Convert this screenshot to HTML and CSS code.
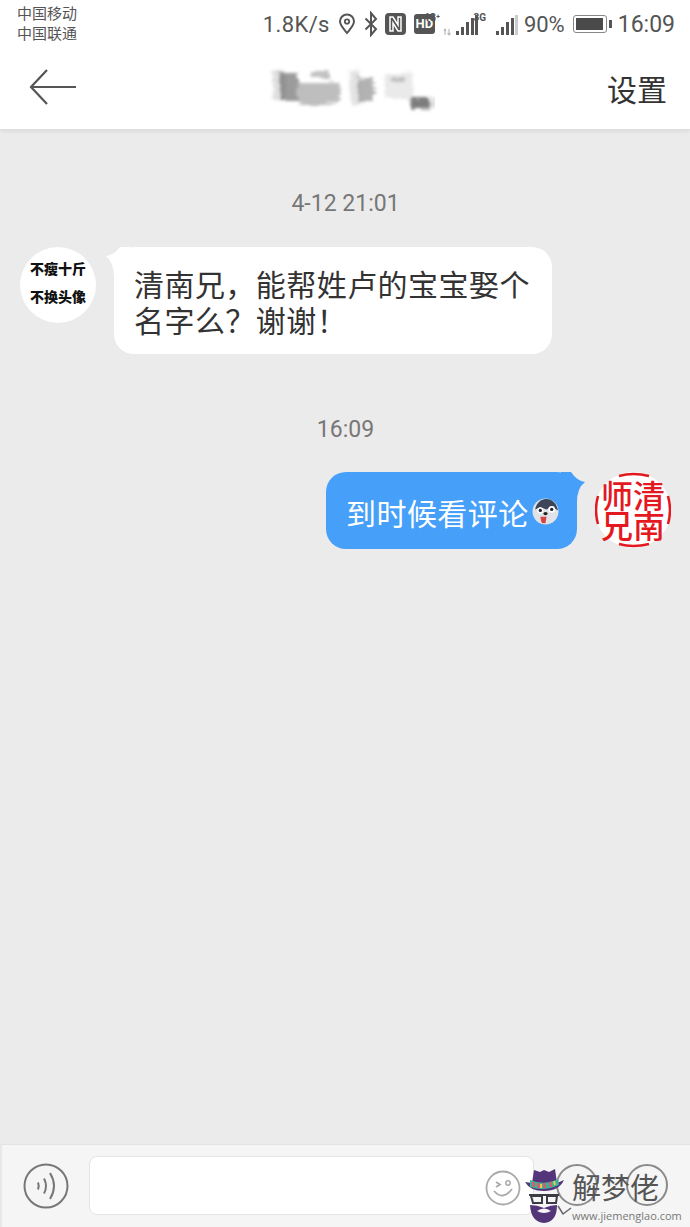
FILE: index.html
```html
<!DOCTYPE html>
<html lang="zh-CN">
<head>
    <meta charset="UTF-8">
    <meta name="viewport" content="width=device-width, initial-scale=1.0">
    <title>私信</title>
    <link rel="stylesheet" href="styles.css">
</head>
<body>
    <div class="page">
        <header class="top">
            <div class="status">
                <div class="carriers">
                    <div>中国移动</div>
                    <div>中国联通</div>
                </div>
                <div class="status-right">
                    <span class="speed">1.8K/s</span>
                    <svg class="ico ico-pin" width="18" height="22" viewBox="0 0 18 22"><path d="M9 20 C5 15 2 12 2 8.500 A7 7 0 0 1 16 8.500 C16 12 13 15 9 20Z" fill="none" stroke="#555" stroke-width="2"/><circle cx="9" cy="8.500" r="2.200" fill="none" stroke="#555" stroke-width="1.800"/></svg>
                    <svg class="ico ico-bt" width="14" height="26" viewBox="0 0 14 26"><path d="M1.500 7.500 L12 18 L7 24 V2 L12 8 L1.500 18.500" fill="none" stroke="#555" stroke-width="2"/></svg>
                    <svg class="ico ico-nfc" width="21" height="22" viewBox="0 0 21 22"><rect width="21" height="22" rx="4" fill="#555"/><path d="M5 4 H8 L13 12 V4 H16 V18 H13 L8 10 V18 H5Z" fill="none" stroke="#fff" stroke-width="1.500"/></svg>
                    <span class="hd">HD</span>
                    <svg class="ico ico-sig4" width="42" height="24" viewBox="0 0 42 24"><path d="M8 17 V23 M7 19 L8 17 L9 19 M12 17 V23 M10.500 21 L12 23 L13.500 21" fill="none" stroke="#bbb" stroke-width="1.200"/><rect x="19" y="19" width="3" height="4" fill="#555"/><rect x="24" y="15" width="3" height="8" fill="#555"/><rect x="29" y="10" width="3" height="13" fill="#555"/><rect x="34" y="6" width="3" height="17" fill="#555"/><rect x="38" y="3" width="3" height="20" fill="#555"/></svg>
                    <span class="net net-4g">4G⁺</span>
                    <svg class="ico ico-sig3" width="34" height="24" viewBox="0 0 34 24"><rect x="11" y="19" width="3" height="4" fill="#555"/><rect x="16" y="15" width="3" height="8" fill="#555"/><rect x="21" y="10" width="3" height="13" fill="#555"/><rect x="26" y="6" width="3" height="17" fill="#555"/><rect x="30" y="3" width="3" height="20" fill="#ccc"/></svg>
                    <span class="net net-3g">3G</span>
                    <span class="batt-text">90%</span>
                    <span class="batt"><span class="batt-fill"></span></span>
                    <span class="clock">16:09</span>
                </div>
            </div>
            <div class="nav">
                <svg class="back" width="48" height="38" viewBox="0 0 48 38"><path d="M18 2 L2 19 L18 36 M2 19 H47" fill="none" stroke="#555" stroke-width="2.200"/></svg>
                <svg class="nick" width="170" height="50" viewBox="0 0 170 50" aria-hidden="true">
                    <defs>
                        <filter id="smudge" x="-10%" y="-20%" width="120%" height="140%">
                            <feTurbulence type="fractalNoise" baseFrequency="0.05 0.45" numOctaves="2" seed="4" result="n"/>
                            <feDisplacementMap in="SourceGraphic" in2="n" scale="9"/>
                            <feGaussianBlur stdDeviation="1.600"/>
                        </filter>
                    </defs>
                    <g filter="url(#smudge)" fill="#666">
                        <rect x="15" y="9" width="18" height="27" opacity=".65"/>
                        <rect x="8" y="6" width="12" height="30" opacity=".2"/>
                        <rect x="33" y="18" width="42" height="22" opacity=".42"/>
                        <rect x="46" y="7" width="18" height="7" opacity=".4"/>
                        <rect x="85" y="7" width="10" height="33" opacity=".18"/>
                        <rect x="93" y="14" width="16" height="24" opacity=".5"/>
                        <rect x="120" y="9" width="28" height="26" opacity=".14"/>
                        <rect x="126" y="12" width="14" height="6" opacity=".3"/>
                        <rect x="146" y="34" width="18" height="11" opacity=".85"/>
                        <rect x="162" y="34" width="9" height="10" opacity=".2"/>
                    </g>
                </svg>
                <div class="settings">设置</div>
            </div>
        </header>

        <main class="chat">
            <div class="time time-first">4-12 21:01</div>
            <div class="row">
                <div class="avatar avatar-txt">
                    <div>不瘦十斤</div>
                    <div>不换头像</div>
                </div>
                <div class="bubble bubble-in">清南兄，能帮姓卢的宝宝娶个名字么？谢谢！</div>
            </div>
            <div class="time time-second">16:09</div>
            <div class="row row-out">
                <div class="bubble bubble-out">
                    到时候看评论
                    <svg class="emoji" width="27" height="27" viewBox="0 0 26 26"><circle cx="13" cy="13" r="12.500" fill="#dfe2e6"/><path d="M3 11 C5 3 10 1 14 1 C20 1 24 6 25 12 L19 8 L14 11 L8 9Z" fill="#3c4658"/><circle cx="8" cy="12" r="3" fill="#fff"/><circle cx="19" cy="11" r="3.200" fill="#fff"/><circle cx="8" cy="12" r="1.600" fill="#223"/><circle cx="19" cy="11" r="1.600" fill="#223"/><ellipse cx="13" cy="15" rx="2" ry="1.500" fill="#222"/><path d="M8 18 H14 L13 24 Q10 25 9 23Z" fill="#d9433f"/></svg>
                </div>
                <div class="avatar avatar-seal">
                    <svg class="seal-ring" width="76" height="76" viewBox="0 0 76 76"><path d="M24 4 Q38 0 54 4 M24 72 Q38 76 54 72 M3 24 Q-1 38 3 52 M73 24 Q77 38 73 52" fill="none" stroke="#e3191f" stroke-width="2.500"/></svg>
                    <div class="seal-text">师清<br>兄南</div>
                </div>
            </div>
        </main>

        <footer class="bar">
            <svg class="voice" width="46" height="46" viewBox="0 0 46 46"><circle cx="23" cy="23" r="21.500" fill="none" stroke="#777" stroke-width="2"/><path d="M15 19.500 Q16.500 23 15 26.500 M21 15.500 Q25 23 21 30.500 M27 10 Q35 23 27 36" fill="none" stroke="#777" stroke-width="2"/></svg>
            <div class="input"></div>
            <svg class="smile" width="36" height="36" viewBox="0 0 36 36"><circle cx="18" cy="18" r="16.500" fill="none" stroke="#aaa" stroke-width="1.800"/><path d="M9 21 Q18 31 27 19 M11 12 L15 14.500 L11 17" fill="none" stroke="#aaa" stroke-width="1.800"/><circle cx="23" cy="13" r="2.200" fill="none" stroke="#aaa" stroke-width="1.500"/></svg>
            <div class="round"></div>
            <div class="round"></div>
        </footer>

        <div class="mark">
            <svg class="mark-man" width="42" height="56" viewBox="0 0 42 56">
                <path d="M9 15 L11 2 L17 4 L21 2 L26 4 L32 1 L34 15 L41 12 Q36 23 21 23 Q7 23 2 14Z" fill="#54357a"/>
                <path d="M7 12 Q21 18 35 11 L36 17 Q21 24 7 19Z" fill="#38b49c"/>
                <path d="M10 14 L11 19 M15 15 L16 20 M21 15 L22 20 M27 14 L28 19" stroke="#e2566a" stroke-width="2.500"/>
                <path d="M18 16 L18 20 M31 13 L32 17" stroke="#f2c94c" stroke-width="2"/>
                <path d="M6 27 H36 M8 28 H19 V35 H10Z M24 28 H34 L33 35 H24Z" fill="none" stroke="#3b3b46" stroke-width="2"/>
                <path d="M7 37 Q14 37 21 40 Q28 37 34 37 Q34 54 21 55 Q8 54 7 37Z" fill="#54357a"/>
                <path d="M14 43 Q21 38 28 43 Q21 47 14 43Z" fill="#f5f5f5"/>
                <path d="M35 38 L40 46 L48 40" fill="none" stroke="#666" stroke-width="1.500"/>
            </svg>
            <div class="mark-text">
                <div class="mark-name">解梦佬</div>
                <div class="mark-url">www.jiemenglao.com</div>
            </div>
        </div>
    </div>
</body>
</html>
```

FILE: styles.css
```css
* {
    box-sizing: border-box;
}
body {
    margin: 0;
    font-family: "Roboto", "Noto Sans CJK SC", sans-serif;
    color: #333;
}
.page {
    position: relative;
    width: 690px;
    height: 1227px;
    display: flex;
    flex-direction: column;
    overflow: hidden;
    background: #ebebeb;
}

/* status + title */
.top {
    height: 130px;
    flex: none;
    background: #fff;
    border-bottom: 1px solid #dedede;
    box-shadow: 0 2px 3px rgba(0,0,0,.06);
}
.status {
    height: 48px;
    display: flex;
    justify-content: space-between;
    padding: 4px 15px 0 17px;
}
.carriers {
    font-size: 15px;
    line-height: 20px;
    color: #555;
}
.status-right {
    display: flex;
    align-items: center;
    height: 40px;
    color: #555;
    position: relative;
}
.speed {
    font-size: 22px;
    letter-spacing: .4px;
}
.ico {
    flex: none;
}
.ico-pin {
    margin-left: 8px;
}
.ico-bt {
    margin-left: 8px;
}
.ico-nfc {
    margin-left: 7px;
}
.hd {
    width: 21px;
    height: 20px;
    margin: 0 2px 0 8px;
    border-radius: 3px;
    background: #555;
    color: #fff;
    font-size: 13px;
    font-weight: 700;
    line-height: 20px;
    text-align: center;
}
.ico-sig3 {
    margin-left: 6px;
}
.net {
    position: absolute;
    top: 8px;
    font-size: 10px;
    font-weight: 700;
}
.net-4g {
    right: 235px;
}
.net-3g {
    right: 189px;
}
.batt-text {
    font-size: 22px;
    margin: 0 8px 0 5px;
}
.batt {
    position: relative;
    width: 34px;
    height: 18px;
    margin-right: 11px;
    padding: 2px;
    border: 1px solid #888;
    border-radius: 3px;
}
.batt::after {
    content: '';
    position: absolute;
    right: -6px;
    top: 4px;
    width: 3px;
    height: 8px;
    background: #555;
}
.batt-fill {
    display: block;
    width: 27px;
    height: 12px;
    background: #4a4a4a;
}
.clock {
    font-size: 23px;
}
.nav {
    height: 81px;
    display: flex;
    align-items: center;
    justify-content: space-between;
    padding: 0 23px 0 29px;
}
.back {
    margin-top: -3px;
}
.nick {
    margin-left: 16px;
}
.settings {
    font-size: 30px;
    margin-top: -1px;
    color: #333;
}

/* messages */
.chat {
    flex: 1;
    padding: 0 19px 0 20px;
}
.time {
    text-align: center;
    font-size: 23px;
    line-height: 28px;
    color: #777;
}
.time-first {
    padding-top: 60px;
    height: 88px;
    margin-bottom: 29px;
}
.time-second {
    margin: 62px 0 28px;
}
.row {
    display: flex;
    align-items: flex-start;
}
.row-out {
    justify-content: flex-end;
}
.avatar {
    position: relative;
    width: 76px;
    height: 76px;
    flex: none;
    border-radius: 50%;
    background: #fff;
}
.avatar-txt {
    padding-top: 7px;
    text-align: center;
    font-family: "Noto Sans CJK SC", sans-serif;
    font-size: 14px;
    font-weight: 900;
    line-height: 28px;
    color: #111;
}
.seal-ring {
    position: absolute;
    left: 0;
    top: 0;
}
.seal-text {
    position: relative;
    padding-top: 7px;
    text-align: center;
    white-space: nowrap;
    font-family: "Noto Sans CJK SC", sans-serif;
    font-size: 32px;
    font-weight: 500;
    line-height: 30px;
    color: #e3191f;
}
.bubble {
    position: relative;
    border-radius: 20px;
    font-size: 30px;
    letter-spacing: .45px;
}
.bubble-in {
    width: 438px;
    margin-left: 18px;
    padding: 21px 10px 14px 20px;
    background: #fff;
    line-height: 36px;
    color: #333;
}
.bubble-in::before {
    content: '';
    position: absolute;
    left: -8px;
    top: 0;
    width: 24px;
    height: 30px;
    background: #fff;
    clip-path: path("M0 9 Q8 8 14 0 L24 0 L24 30 L8 30 Q8 16 0 9Z");
}
.bubble-out {
    display: flex;
    align-items: center;
    width: 251px;
    height: 77px;
    margin-right: 18px;
    padding: 2px 0 0 20px;
    background: #46a0fa;
    color: #fff;
}
.bubble-out::after {
    content: '';
    position: absolute;
    right: -8px;
    top: 0;
    width: 24px;
    height: 30px;
    background: #46a0fa;
    clip-path: path("M24 10 Q16 9 10 0 L0 0 L0 30 L16 30 Q16 16 24 10Z");
}
.emoji {
    flex: none;
    margin-left: 3px;
}

/* input bar */
.bar {
    height: 83px;
    flex: none;
    display: flex;
    align-items: center;
    padding: 0 0 0 22px;
    background: #f5f5f5;
    border-top: 1px solid #e2e2e2;
    border-left: 2px solid #e8e8e8;
    position: relative;
}
.voice {
    flex: none;
    margin-left: -1px;
}
.input {
    width: 445px;
    height: 59px;
    margin: -1px 0 0 20px;
    background: #fff;
    border: 1px solid #e4e4e4;
    border-radius: 8px;
}
.smile {
    position: absolute;
    left: 483px;
    top: 25px;
}
.round {
    width: 42px;
    height: 42px;
    flex: none;
    margin: -3px 0 0 28px;
    border: 2px solid #8a8a8a;
    border-radius: 50%;
}
.input + .smile + .round {
    margin-left: 22px;
}

/* site watermark */
.mark {
    position: absolute;
    left: 523px;
    top: 1168px;
    display: flex;
    width: 167px;
}
.mark-man {
    flex: none;
    overflow: visible;
}
.mark-text {
    margin-left: 7px;
    padding-top: 3px;
    white-space: nowrap;
}
.mark-name {
    font-size: 29px;
    line-height: 36px;
    color: #555;
}
.mark-url {
    font-family: "Open Sans", sans-serif;
    font-size: 11px;
    line-height: 16px;
    margin-top: 1px;
    color: #777;
}
```
